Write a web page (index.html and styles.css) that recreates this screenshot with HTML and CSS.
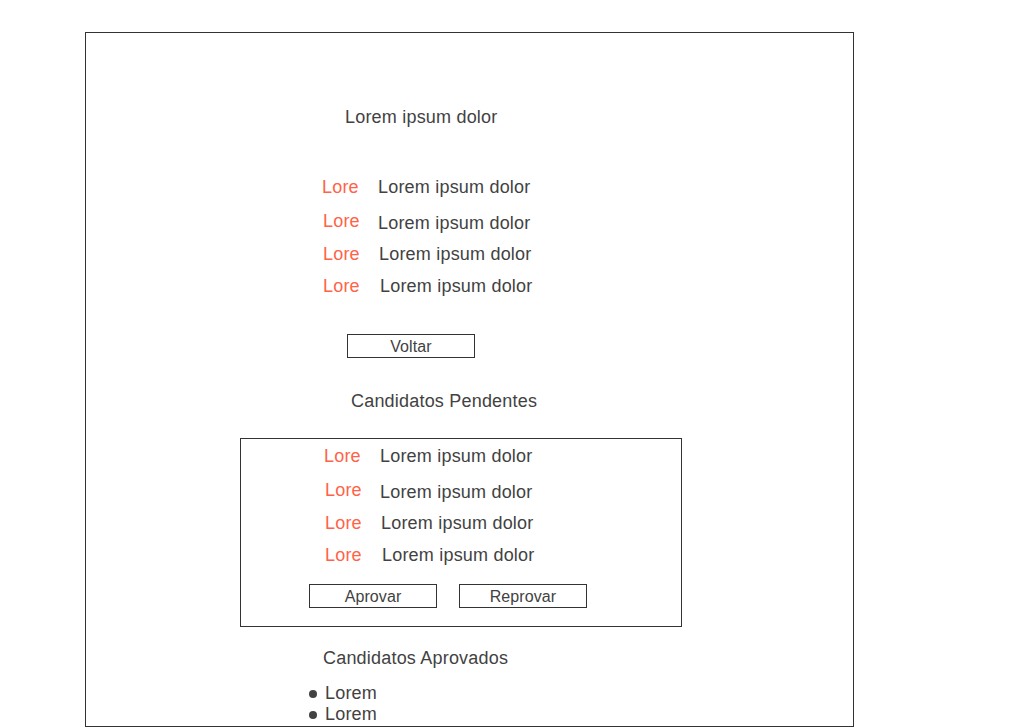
FILE: index.html
```html
<!DOCTYPE html>
<html lang="pt">
<head>
<meta charset="utf-8">
<title>Candidatos</title>
<link rel="stylesheet" href="styles.css">
</head>
<body>
<div class="frame">
  <div class="title">Lorem ipsum dolor</div>

  <div class="rows rows-top">
    <div class="row r1"><span class="lbl">Lore</span><span class="val">Lorem ipsum dolor</span></div>
    <div class="row r2"><span class="lbl">Lore</span><span class="val">Lorem ipsum dolor</span></div>
    <div class="row r3"><span class="lbl">Lore</span><span class="val">Lorem ipsum dolor</span></div>
    <div class="row r4"><span class="lbl">Lore</span><span class="val">Lorem ipsum dolor</span></div>
  </div>

  <button class="btn btn-voltar">Voltar</button>

  <div class="heading heading-pend">Candidatos Pendentes</div>

  <div class="box">
    <div class="rows rows-box">
      <div class="row r1"><span class="lbl">Lore</span><span class="val">Lorem ipsum dolor</span></div>
      <div class="row r2"><span class="lbl">Lore</span><span class="val">Lorem ipsum dolor</span></div>
      <div class="row r3"><span class="lbl">Lore</span><span class="val">Lorem ipsum dolor</span></div>
      <div class="row r4"><span class="lbl">Lore</span><span class="val">Lorem ipsum dolor</span></div>
    </div>
    <div class="actions">
      <button class="btn">Aprovar</button>
      <button class="btn">Reprovar</button>
    </div>
  </div>

  <div class="heading heading-aprov">Candidatos Aprovados</div>

  <ul class="bullets">
    <li>Lorem</li>
    <li>Lorem</li>
  </ul>
</div>
</body>
</html>
```

FILE: styles.css
```css
html, body {
  margin: 0;
  padding: 0;
  background: #ffffff;
  overflow: hidden;
}

body {
  font-family: "Liberation Sans", Arial, sans-serif;
  font-size: 18px;
  letter-spacing: 0.2px;
  color: #424242;
}

.frame {
  box-sizing: border-box;
  margin: 32px 0 0 85px;
  width: 769px;
  height: 695px;
  border: 1px solid #333333;
  display: flex;
  flex-direction: column;
  align-items: flex-start;
}

.title {
  line-height: 20px;
  margin: 74px 0 0 259px;
}

.rows {
  display: flex;
  flex-direction: column;
  align-items: flex-start;
}

.rows-top {
  margin: 50px 0 0 237px;
}

.rows-box {
  margin: 7px 0 0 84px;
}

.row {
  display: flex;
  align-items: flex-start;
  line-height: 20px;
}

.lbl {
  color: #ff6347;
  width: 36px;
  white-space: nowrap;
}

.val {
  white-space: nowrap;
}

.r1 .lbl { margin-left: -1px; }
.r1 .val { margin-left: 20px; }
.r2 { margin-top: 14px; }
.r2 .val { margin-left: 19px; margin-top: 2px; }
.r3 { margin-top: 11px; }
.r3 .val { margin-left: 20px; }
.r4 { margin-top: 12px; }
.r4 .val { margin-left: 21px; }

.btn {
  box-sizing: border-box;
  width: 128px;
  height: 24px;
  margin: 0;
  padding: 1px 0 0;
  border: 1px solid #333333;
  border-radius: 0;
  background: #ffffff;
  font-family: "Liberation Sans", Arial, sans-serif;
  font-size: 16px;
  letter-spacing: 0.1px;
  line-height: 21px;
  color: #424242;
  text-align: center;
}

.btn-voltar {
  margin: 38px 0 0 261px;
}

.heading {
  line-height: 20px;
}

.heading-pend {
  margin: 33px 0 0 265px;
}

.box {
  box-sizing: border-box;
  margin: 27px 0 0 154px;
  width: 442px;
  height: 189px;
  border: 1px solid #333333;
  display: flex;
  flex-direction: column;
  align-items: flex-start;
}

.actions {
  display: flex;
  gap: 22px;
  margin: 19px 0 0 68px;
}

.heading-aprov {
  margin: 21px 0 0 237px;
}

.bullets {
  list-style: none;
  margin: 15px 0 0 223px;
  padding: 0;
}

.bullets li {
  display: flex;
  align-items: center;
  line-height: 21px;
}

.bullets li::before {
  content: "";
  width: 8px;
  height: 8px;
  border-radius: 50%;
  background: #424242;
  margin-right: 8px;
}
```
